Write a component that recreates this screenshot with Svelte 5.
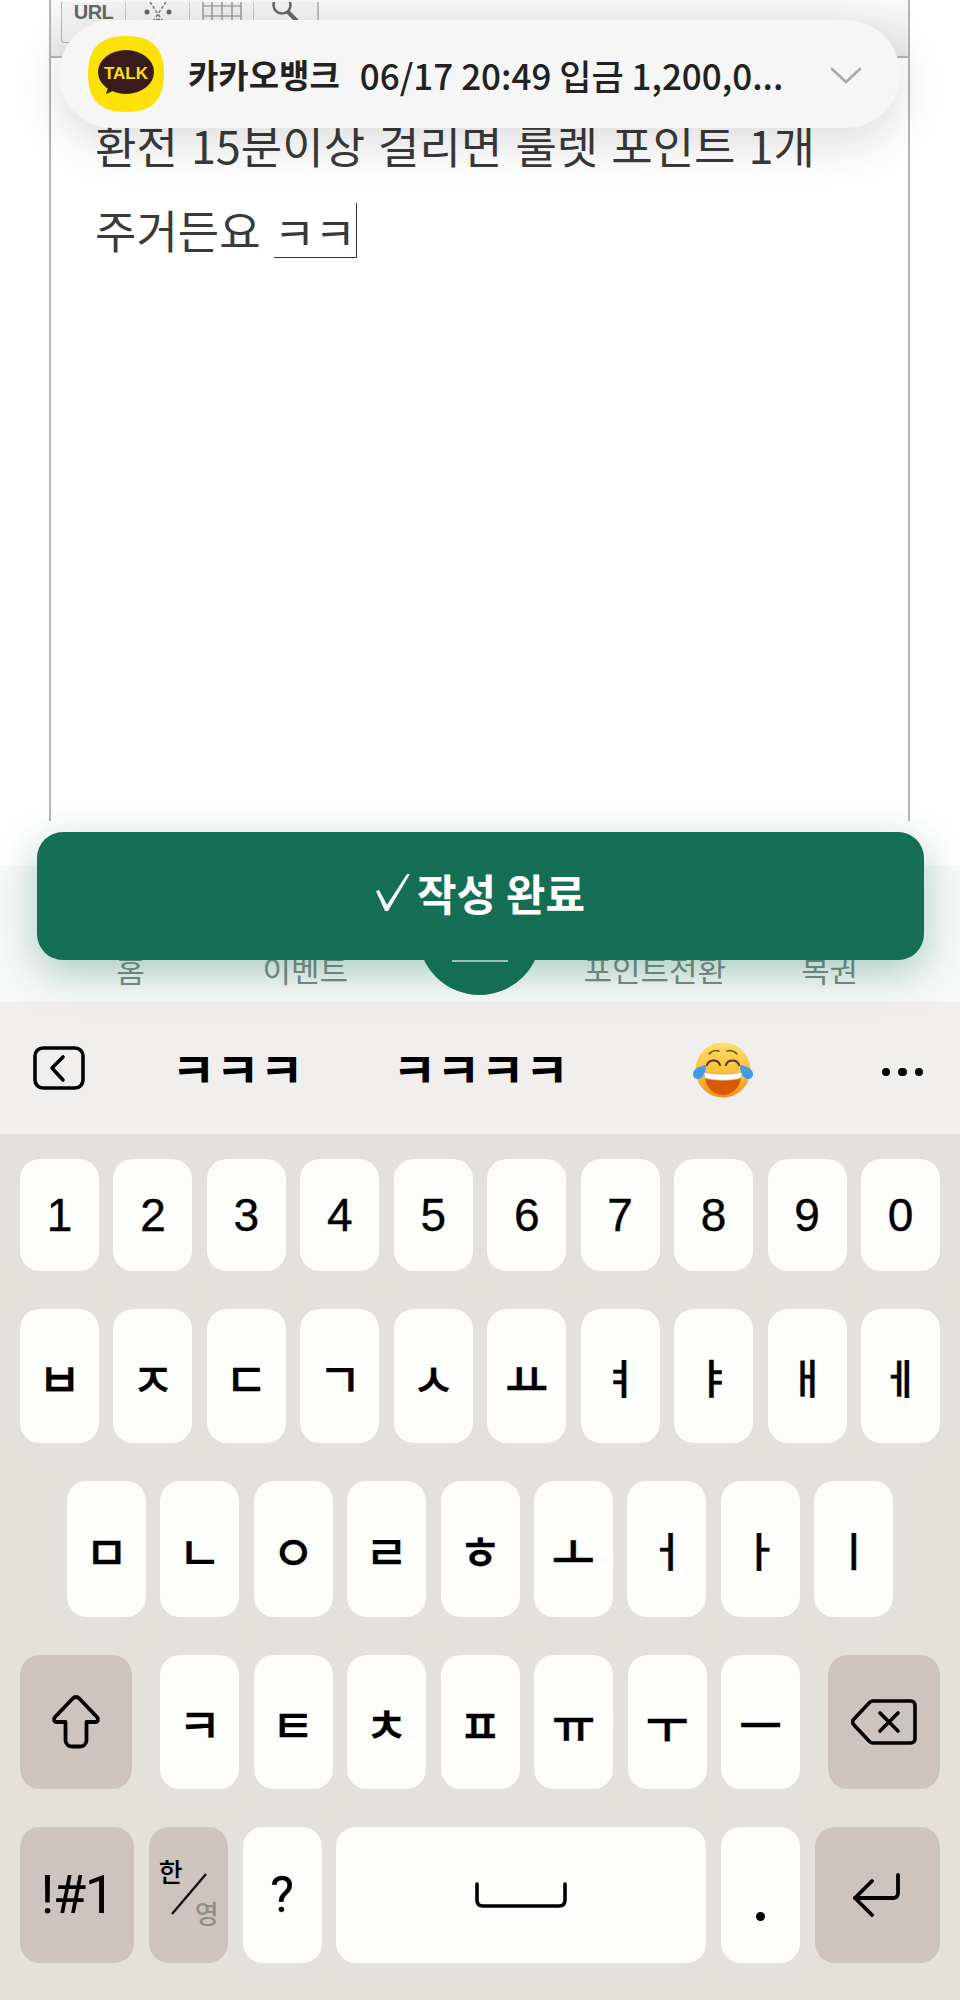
<script>
  const digits = ['1','2','3','4','5','6','7','8','9','0'];
  const row2 = ['ㅂ','ㅈ','ㄷ','ㄱ','ㅅ','ㅛ','ㅕ','ㅑ','ㅐ','ㅔ'];
  const row3 = ['ㅁ','ㄴ','ㅇ','ㄹ','ㅎ','ㅗ','ㅓ','ㅏ','ㅣ'];
  const row4 = ['ㅋ','ㅌ','ㅊ','ㅍ','ㅠ','ㅜ','ㅡ'];
  const tall = 'ㅕㅑㅐㅔㅓㅏㅣ';
</script>

<div class="screen">
  <div class="page">
    <div class="editor">
      <div class="toolbar">
        <div class="tools">
          <span class="tool url">URL</span>
          <span class="tool">
            <svg width="36" height="30" viewBox="0 0 36 30" fill="none" stroke="#777" stroke-width="1.5">
              <path d="M10 0l16 24M26 0L10 24" stroke-dasharray="3 2"/>
              <circle cx="7" cy="10" r="2.5" fill="#666" stroke="none"/>
              <circle cx="29" cy="10" r="2.5" fill="#666" stroke="none"/>
              <circle cx="18" cy="19" r="2.5" fill="#666" stroke="none"/>
            </svg>
          </span>
          <span class="tool">
            <svg width="40" height="30" viewBox="0 0 40 30" fill="#eee" stroke="#888" stroke-width="1.2">
              <rect x="1" y="-6" width="38" height="30"/>
              <path d="M10 -6v30M20 -6v30M30 -6v30M1 4h38M1 14h38"/>
            </svg>
          </span>
          <span class="tool">
            <svg width="36" height="30" viewBox="0 0 36 30" fill="none" stroke="#666">
              <circle cx="14" cy="3" r="8.5" stroke-width="2.5"/>
              <path d="M20 10l10 10" stroke-width="4"/>
            </svg>
          </span>
        </div>
      </div>
      <div class="content">
        <p>환전 15분이상 걸리면 룰렛 포인트 1개</p>
        <p>주거든요 <span class="composing">ㅋㅋ</span></p>
      </div>
    </div>

    <nav class="nav">
      <span>홈</span>
      <span>이벤트</span>
      <span class="fab"><i></i></span>
      <span>포인트전환</span>
      <span>복권</span>
    </nav>

    <div class="notice">
      <svg class="talk" width="76" height="76" viewBox="0 0 76 76">
        <path d="M38 0C64 0 76 12 76 38S64 76 38 76 0 64 0 38 12 0 38 0Z" fill="#fbe106"/>
        <path d="M18 58l4-13 12 6Z" fill="#3b1c1c"/>
        <ellipse cx="38" cy="36" rx="28" ry="22" fill="#3b1c1c"/>
        <text x="38" y="43" text-anchor="middle" class="talk-text">TALK</text>
      </svg>
      <strong>카카오뱅크</strong>
      <span class="msg">06/17 20:49 입금 1,200,0...</span>
      <svg class="chev" width="32" height="17" viewBox="0 0 32 17" fill="none" stroke="#a9a9a9" stroke-width="2.6" stroke-linecap="round" stroke-linejoin="round">
        <path d="M2 2l14 13L30 2"/>
      </svg>
    </div>

    <button class="done">
      <svg width="34" height="37" viewBox="0 0 34 37" fill="#fff">
        <path d="M0 17l3-1 8 15L31 0h3L12 37h-3Z"/>
      </svg>
      <span>작성 완료</span>
    </button>
  </div>

  <div class="suggest">
    <div class="back">
      <svg width="52" height="44" viewBox="0 0 52 44" fill="none" stroke="#000" stroke-width="3.6" stroke-linecap="round" stroke-linejoin="round">
        <rect x="2" y="2" width="48" height="40" rx="8"/>
        <path d="M30 11L19 22l11 12"/>
      </svg>
    </div>
    <div class="word">ㅋㅋㅋ</div>
    <div class="word">ㅋㅋㅋㅋ</div>
    <div class="emoji">
      <svg width="62" height="58" viewBox="0 0 62 58">
        <defs>
          <linearGradient id="face" x1="0" y1="0" x2="0" y2="1">
            <stop offset="0" stop-color="#fde068"/>
            <stop offset="0.6" stop-color="#fbb93a"/>
            <stop offset="1" stop-color="#ef8f1e"/>
          </linearGradient>
        </defs>
        <circle cx="31" cy="29" r="27.5" fill="url(#face)"/>
        <path d="M13 32c6 2 30 2 36 0 1 12-7 22-18 22S12 44 13 32Z" fill="#d85a08"/>
        <path d="M12 31c6 3 32 3 38 0l-1 6c-8 3-28 3-36 0Z" fill="#fff" stroke="#b9b2a5" stroke-width=".6"/>
        <path d="M15 24c2-6 11-6 13 0M34 24c2-6 11-6 13 0" fill="none" stroke="#5a3a12" stroke-width="2.2" stroke-linecap="round"/>
        <path d="M17 13c3-3 7-4 10-3M45 13c-3-3-7-4-10-3" fill="none" stroke="#7a5012" stroke-width="1.6" stroke-linecap="round"/>
        <path d="M1 33c0-5 6-8 13-9 0 6-3 14-8 14-3 0-5-2-5-5Z" fill="#3f9be6"/>
        <path d="M61 33c0-5-6-8-13-9 0 6 3 14 8 14 3 0 5-2 5-5Z" fill="#3f9be6"/>
      </svg>
    </div>
    <div class="dots"><i></i><i></i><i></i></div>
  </div>

  <div class="keyboard">
    <div class="row r1">
      {#each digits as d}<div class="key num">{d}</div>{/each}
    </div>
    <div class="row r2">
      {#each row2 as k}<div class="key jamo" class:tall={tall.includes(k)}>{k}</div>{/each}
    </div>
    <div class="row r3">
      {#each row3 as k}<div class="key jamo" class:tall={tall.includes(k)}>{k}</div>{/each}
    </div>
    <div class="row r4">
      <div class="key fn side">
        <svg width="50" height="54" viewBox="0 0 50 54" fill="none" stroke="#000" stroke-width="3.8" stroke-linejoin="round">
          <path d="M25 2c1.500 0 2.500.6 3.500 1.700L46 22c2 2.200 1 5-2 5H35.500v18c0 4-3 6.500-6 6.500h-9c-3 0-6-2.500-6-6.500V27H6c-3 0-4-2.800-2-5L21.500 3.700C22.500 2.600 23.500 2 25 2Z"/>
        </svg>
      </div>
      <div class="mid">
        {#each row4 as k}<div class="key jamo">{k}</div>{/each}
      </div>
      <div class="key fn side">
        <svg width="66" height="46" viewBox="0 0 66 46" fill="none" stroke="#000" stroke-width="3.600" stroke-linecap="round" stroke-linejoin="round">
          <path d="M22 2h38c2.200 0 4 1.800 4 4v34c0 2.200-1.800 4-4 4H22c-1.500 0-2.500-.5-3.500-1.500L3 26c-2-2-2-4 0-6L18.500 3.500C19.500 2.500 20.500 2 22 2Z"/>
          <path d="M29 14l18 18M47 14L29 32"/>
        </svg>
      </div>
    </div>
    <div class="row r5">
      <div class="key fn sym">!#1</div>
      <div class="key fn lang">
        <span class="han">한</span>
        <svg class="slash" width="38" height="42" viewBox="0 0 38 42"><path d="M36 1L2 41" stroke="#111" stroke-width="2.400"/></svg>
        <span class="yeong">영</span>
      </div>
      <div class="key qm">?</div>
      <div class="key space">
        <svg width="92" height="26" viewBox="0 0 92 26" fill="none" stroke="#000" stroke-width="3.600" stroke-linecap="round" stroke-linejoin="round">
          <path d="M2 2v16c0 4 2 6 6 6h76c4 0 6-2 6-6V2"/>
        </svg>
      </div>
      <div class="key dot"><b></b></div>
      <div class="key fn enter">
        <svg width="50" height="44" viewBox="0 0 50 44" fill="none" stroke="#000" stroke-width="3.800" stroke-linecap="round" stroke-linejoin="round">
          <path d="M46 2v18c0 3-2 5-5 5H3"/>
          <path d="M20 8L3 25l17 17"/>
        </svg>
      </div>
    </div>
  </div>
</div>

<style>
  :global(body) {
    margin: 0;
    background: #fff;
  }
  .screen {
    width: 960px;
    height: 2000px;
    display: flex;
    flex-direction: column;
    overflow: hidden;
    font-family: "Noto Sans CJK KR", "Noto Sans", sans-serif;
  }
  .page {
    position: relative;
    height: 1002px;
    background: #fff;
    display: flex;
    flex-direction: column;
    justify-content: space-between;
  }
  .editor {
    height: 821px;
    margin: 0 50px 0 49px;
    border-left: 2px solid #b4b4b4;
    border-right: 2px solid #b4b4b4;
  }
  .toolbar {
    height: 56px;
    background: linear-gradient(#fafafa, #e9e9e9);
    border-bottom: 2px solid #b4b4b4;
    padding-left: 10px;
  }
  .tools {
    display: inline-flex;
    height: 40px;
    border: 1.5px solid #b4b4b4;
    border-top: 0;
    border-radius: 0 0 4px 4px;
    background: #f2f2f2;
  }
  .tool {
    width: 63px;
    height: 22px;
    overflow: hidden;
    display: flex;
    justify-content: center;
    border-right: 1.5px solid #c4c4c4;
    color: #666;
  }
  .url {
    font: 700 20px/20px "Liberation Sans", sans-serif;
    letter-spacing: -0.5px;
  }
  .content {
    padding: 0 0 0 44px;
    margin-top: 44px;
    font-size: 45px;
    font-weight: 400;
    word-spacing: 3px;
    color: #3a3a3a;
    line-height: 85px;
  }
  .content p {
    margin: 0;
    white-space: nowrap;
  }
  .composing {
    display: inline-block;
    height: 54px;
    line-height: 58px;
    vertical-align: top;
    margin-top: 16px;
    letter-spacing: -0.5px;
    border-bottom: 1.5px solid #333;
    border-right: 1.5px solid #333;
  }
  .nav {
    height: 136px;
    background: #f8f9f9;
    padding: 0 43px 15px;
    display: grid;
    grid-template-columns: repeat(5, 1fr);
    align-items: end;
    justify-items: center;
    font-size: 31px;
    line-height: 36px;
    color: #7c8884;
    box-sizing: border-box;
  }
  .fab {
    width: 123px;
    height: 123px;
    margin-bottom: -8px;
    border-radius: 50%;
    background: #156f54;
    display: flex;
    justify-content: center;
  }
  .fab i {
    width: 56px;
    height: 2px;
    margin-top: 88px;
    background: #c6dcd5;
  }
  .notice {
    position: absolute;
    left: 59px;
    top: 20px;
    width: 841px;
    height: 108px;
    box-sizing: border-box;
    padding-left: 29px;
    border-radius: 54px;
    background: #f6f6f6;
    box-shadow: 0 14px 50px rgba(0, 0, 0, 0.14);
    display: flex;
    align-items: center;
    color: #222;
  }
  .talk-text {
    font: 700 17px "Liberation Sans", sans-serif;
    fill: #fbe106;
  }
  .notice strong {
    margin-left: 24px;
    font-size: 33px;
    font-weight: 700;
    white-space: nowrap;
  }
  .msg {
    margin-left: 20px;
    font-size: 35px;
    font-weight: 500;
    white-space: nowrap;
  }
  .chev {
    position: absolute;
    left: 771px;
    top: 47px;
  }
  .done {
    position: absolute;
    left: 37px;
    top: 832px;
    width: 887px;
    height: 128px;
    border: 0;
    border-radius: 26px;
    background: #156f54;
    color: #fff;
    font-family: inherit;
    font-size: 43px;
    font-weight: 700;
    padding: 0 0 8px;
    box-shadow: 0 12px 40px rgba(21, 111, 84, 0.35);
    display: flex;
    align-items: center;
    justify-content: center;
    gap: 7px;
  }
  .suggest {
    height: 132px;
    background: #f1efed;
    display: grid;
    grid-template-columns: 116px repeat(3, 243px) 1fr;
    align-items: center;
    justify-items: center;
  }
  .back {
    justify-self: start;
    margin-left: 33px;
    display: flex;
  }
  .word {
    font-size: 48px;
    font-weight: 700;
    color: #000;
    line-height: 1;
    margin-bottom: 3px;
  }
  .emoji {
    display: flex;
    margin: 4px 2px 0 0;
  }
  .dots {
    display: flex;
    gap: 8px;
    margin-top: 8px;
  }
  .dots i {
    width: 8.500px;
    height: 8.500px;
    border-radius: 50%;
    background: #000;
  }
  .keyboard {
    flex: 1;
    background: #e4e1dc;
    box-sizing: border-box;
    padding: 25px 20px 0;
    display: flex;
    flex-direction: column;
    gap: 38px;
  }
  .row {
    display: flex;
    justify-content: space-between;
  }
  .r1 { height: 112px; }
  .r2 { height: 134px; }
  .r3 { height: 136px; padding: 0 47px; }
  .r4 { height: 134px; }
  .r5 { height: 136px; }
  .mid {
    width: 640px;
    display: flex;
    justify-content: space-between;
  }
  .key {
    width: 79px;
    border-radius: 20px;
    background: #fdfdfb;
    display: flex;
    align-items: center;
    justify-content: center;
    color: #000;
    line-height: 1;
    position: relative;
  }
  .jamo {
    font-size: 47px;
    font-weight: 500;
    -webkit-text-stroke: 0.3px #000;
  }
  .jamo.tall {
    font-size: 41px;
  }
  .num {
    font-family: "Liberation Sans", sans-serif;
    font-size: 46px;
    -webkit-text-stroke: 0.4px #000;
  }
  .fn {
    background: #cdc5bd;
  }
  .side {
    width: 112px;
  }
  .sym {
    width: 114px;
    font-family: Roboto, sans-serif;
    font-size: 54px;
    letter-spacing: -1.5px;
  }
  .han {
    position: absolute;
    left: 10px;
    top: 31px;
    font-size: 26px;
    font-weight: 500;
  }
  .slash {
    position: absolute;
    left: 21px;
    top: 46px;
  }
  .yeong {
    position: absolute;
    left: 46px;
    top: 73px;
    font-size: 26px;
    font-weight: 500;
    color: #8f8b86;
  }
  .qm {
    font-family: Roboto, sans-serif;
    font-size: 50px;
    -webkit-text-stroke: 0.3px #000;
  }
  .space {
    width: 370px;
  }
  .dot {
    align-items: flex-end;
  }
  .dot b {
    width: 9px;
    height: 9px;
    border-radius: 50%;
    background: #000;
    margin-bottom: 42px;
  }
  .enter {
    width: 125px;
  }
</style>
